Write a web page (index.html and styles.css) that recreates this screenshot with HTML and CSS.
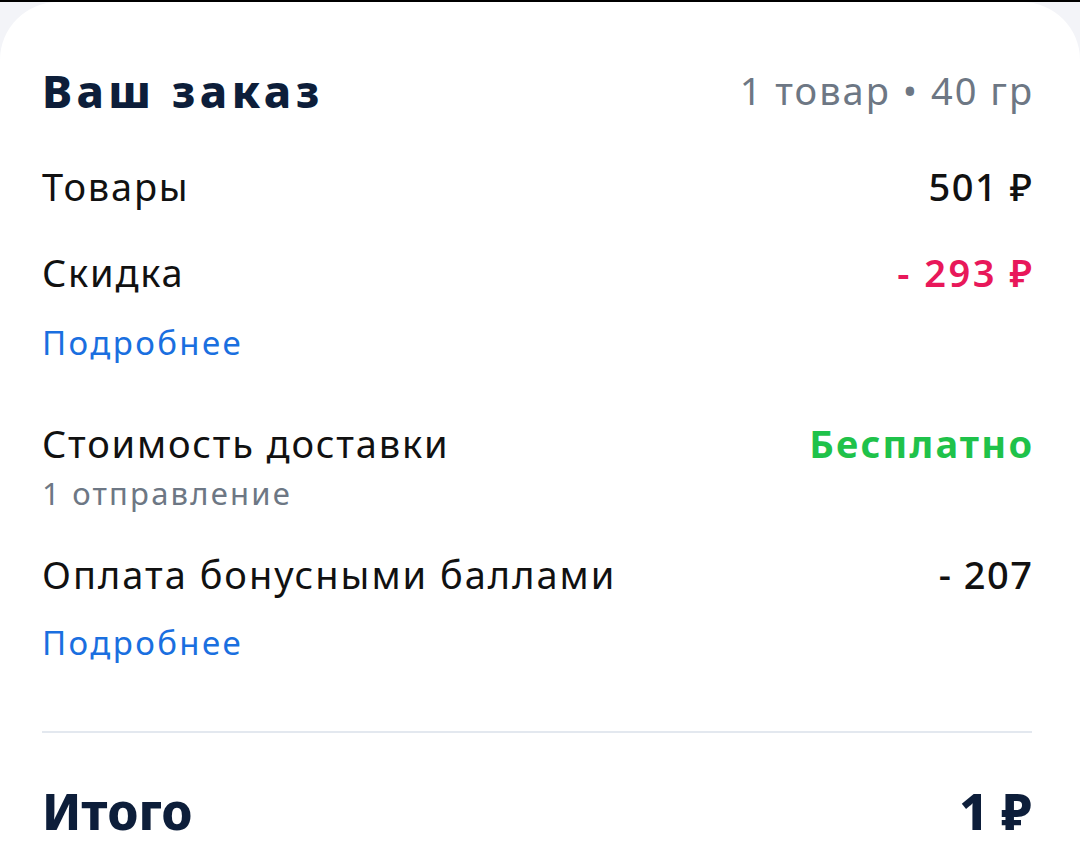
FILE: index.html
```html
<!DOCTYPE html>
<html lang="ru">
<head>
<meta charset="utf-8">
<link rel="stylesheet" href="styles.css">
</head>
<body>
<div class="topline"></div>
<div class="card">
  <div class="header">
    <h1 class="title">Ваш заказ</h1>
    <div class="meta">1 товар • 40 гр</div>
  </div>

  <div class="row r-goods">
    <span class="label">Товары</span>
    <span class="value">501 ₽</span>
  </div>

  <div class="row r-discount">
    <span class="label">Скидка</span>
    <span class="value pink">- 293 ₽</span>
  </div>
  <a class="more m-discount">Подробнее</a>

  <div class="row r-delivery">
    <span class="label">Стоимость доставки</span>
    <span class="value green">Бесплатно</span>
  </div>
  <div class="sub">1 отправление</div>

  <div class="row r-bonus">
    <span class="label">Оплата бонусными баллами</span>
    <span class="value">- 207</span>
  </div>
  <a class="more m-bonus">Подробнее</a>

  <div class="divider"></div>

  <div class="row total">
    <span class="total-label">Итого</span>
    <span class="total-value">1 ₽</span>
  </div>
</div>
</body>
</html>
```

FILE: styles.css
```css
html, body {
  margin: 0;
  padding: 0;
  background: #f3f4f8;
  height: 100%;
}
body {
  font-family: "Noto Sans", "DejaVu Sans", sans-serif;
  overflow: hidden;
}
.topline {
  height: 2px;
  background: #000;
}
.card {
  background: #fff;
  border-radius: 58px 58px 0 0;
  padding: 58px 48px 0 42px;
  height: 861px;
  box-sizing: border-box;
  display: flex;
  flex-direction: column;
}
.header {
  display: flex;
  justify-content: space-between;
  align-items: center;
  height: 60px;
}
.title {
  margin: 0;
  font-size: 45px;
  font-weight: 800;
  color: #0d1e3a;
  letter-spacing: 4.5px;
}
.meta {
  font-size: 38px;
  color: #6d7784;
  letter-spacing: 2px;
  margin-right: -2px;
}
.row {
  display: flex;
  justify-content: space-between;
  align-items: center;
  height: 56px;
  font-size: 38px;
  color: #111;
}
.label {
  letter-spacing: 1.8px;
}
.r-bonus .label { letter-spacing: 2px; }
.r-goods { margin-top: 38px; }
.r-discount { margin-top: 30px; }
.r-delivery { margin-top: 44px; }
.r-bonus { margin-top: 31px; }
.value {
  font-weight: 500;
  letter-spacing: 1.5px;
  margin-right: -1.5px;
}
.pink { color: #e8185a; font-weight: 600; letter-spacing: 2.5px; margin-right: -2.5px; }
.green { color: #1fc24a; font-weight: 700; letter-spacing: 2.2px; margin-right: -2.2px; }
.more {
  display: block;
  height: 56px;
  line-height: 56px;
  font-size: 33px;
  letter-spacing: 2.4px;
  color: #1a6fe0;
}
.m-discount { margin-top: 15px; }
.m-bonus { margin-top: 13px; }
.sub {
  height: 44px;
  line-height: 44px;
  font-size: 31px;
  letter-spacing: 2.2px;
  color: #6d7784;
}
.divider {
  margin-top: 60px;
  height: 2px;
  background: #e3e8ef;
}
.total {
  margin-top: 50px;
}
.total-label, .total-value {
  font-size: 50px;
  font-weight: 800;
  color: #0d1e3a;
}
```
